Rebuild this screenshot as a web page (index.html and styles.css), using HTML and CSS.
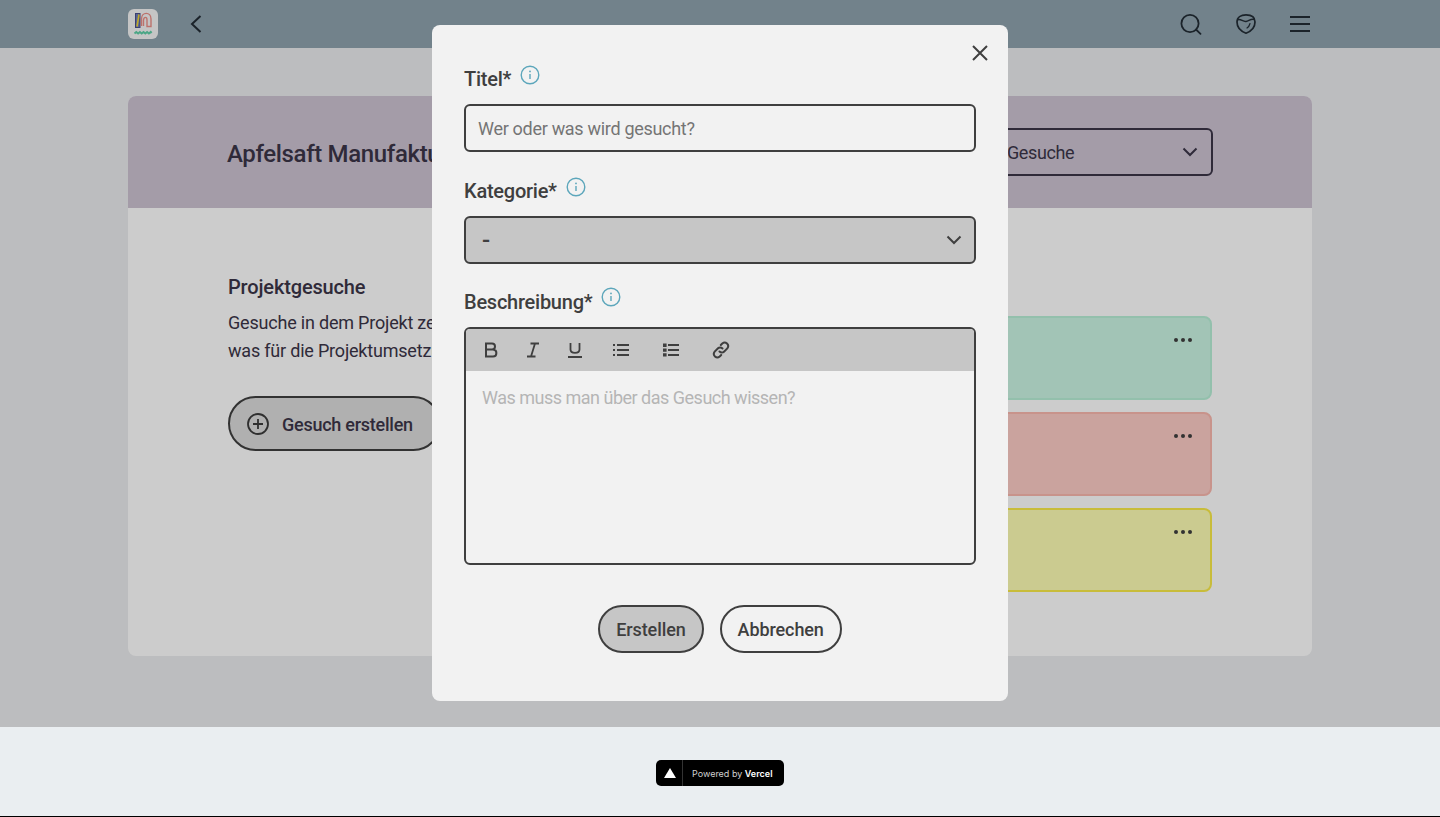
FILE: index.html
```html
<!DOCTYPE html>
<html lang="de">
<head>
    <meta charset="UTF-8">
    <meta name="viewport" content="width=device-width, initial-scale=1.0">
    <title>Projektgesuche</title>
    <link rel="stylesheet" href="styles.css">
</head>
<body>
<div class="page">
    <header class="topbar">
        <div class="topbar-left">
            <div class="logo">
                <svg width="30" height="30" viewBox="0 0 30 30" fill="none">
                    <rect x="7.500" y="4.500" width="4.500" height="14" fill="#6f7cb8" stroke="#4a4f8c"/>
                    <path d="M9 17.500 L11 5.500" stroke="#f2d632" stroke-width="1.600"/>
                    <path d="M13.500 17 V10 C13.500 2.500 23 2.500 23 10 V17.500 H19 V11 C19 7.500 16 7.500 15.500 11 V17" stroke="#ec8f88" stroke-width="1.400"/>
                    <path d="M6.500 24.500 l1.800 -1.500 1.800 1.500 1.800 -1.500 1.800 1.500 1.800 -1.500 1.800 1.500 1.800 -1.500 1.800 1.500 1.800 -1.500 .9 1" stroke="#5fd0a8" stroke-width="2"/>
                </svg>
            </div>
            <button class="icon-button back-button" type="button">
                <svg width="12" height="18" viewBox="0 0 12 18" fill="none"><path d="M10.500 1 L2 9 L10.500 17" stroke="#222c35" stroke-width="2"/></svg>
            </button>
        </div>
        <div class="topbar-right">
            <svg width="22" height="22" viewBox="0 0 22 22" fill="none"><circle cx="10" cy="10.500" r="8.600" stroke="#222c35" stroke-width="1.800"/><path d="M16 16.500 L20.500 20.800" stroke="#222c35" stroke-width="1.800" stroke-linecap="round"/></svg>
            <svg width="20" height="20" viewBox="0 0 20 20" fill="none"><path d="M10 19.200 C5.500 17.500 1 14 1 8 C1 3 5 .9 10 .9 C15 .9 19 3 19 8 C19 14 14.500 17.500 10 19.200 Z" stroke="#222c35" stroke-width="1.700"/><path d="M1.500 6 C4 4 7 8 10 7.500 C13 7 14.500 4.500 18.500 5.500" stroke="#222c35" stroke-width="1.400"/><path d="M14 9.500 C13.500 11.500 12.500 13 11 14" stroke="#222c35" stroke-width="1.200" stroke-linecap="round"/></svg>
            <svg width="20" height="16" viewBox="0 0 20 16" fill="none"><path d="M0 1 H20 M0 8 H20 M0 15 H20" stroke="#222c35" stroke-width="2"/></svg>
        </div>
    </header>

    <main class="content">
        <section class="project-card">
            <div class="project-head">
                <h1>Apfelsaft Manufaktur</h1>
                <div class="head-select">
                    <span>Gesuche</span>
                    <svg width="16" height="10" viewBox="0 0 16 10" fill="none"><path d="M1.500 1.500 L8 8 L14.500 1.500" stroke="#3b3548" stroke-width="2"/></svg>
                </div>
            </div>
            <div class="project-body">
                <div class="intro">
                    <h2>Projektgesuche</h2>
                    <p>Gesuche in dem Projekt zeigen,<br>was für die Projektumsetzung fehlt.</p>
                    <button class="create-button" type="button">
                        <svg width="24" height="24" viewBox="0 0 24 24" fill="none"><circle cx="12" cy="12" r="10" stroke="#3b3b3b" stroke-width="1.800"/><path d="M12 7 V17 M7 12 H17" stroke="#3b3b3b" stroke-width="1.800"/></svg>
                        <span>Gesuch erstellen</span>
                    </button>
                </div>
                <div class="request-list">
                    <div class="request green"><span class="dots"><i></i><i></i><i></i></span></div>
                    <div class="request red"><span class="dots"><i></i><i></i><i></i></span></div>
                    <div class="request yellow"><span class="dots"><i></i><i></i><i></i></span></div>
                </div>
            </div>
        </section>
    </main>

    <div class="overlay">
        <form class="modal">
            <button class="close-button" type="button">
                <svg width="16" height="16" viewBox="0 0 16 16" fill="none"><path d="M1 1 L15 15 M15 1 L1 15" stroke="#3f3f3f" stroke-width="2"/></svg>
            </button>

            <div class="field-label">
                <label>Titel*</label>
                <svg class="info" width="20" height="20" viewBox="0 0 20 20" fill="none"><circle cx="10" cy="10" r="8.800" stroke="#5ca6bb" stroke-width="1.400"/><path d="M10 9 V14" stroke="#5ca6bb" stroke-width="1.400"/><circle cx="10" cy="6.400" r=".9" fill="#5ca6bb"/></svg>
            </div>
            <div class="text-input">Wer oder was wird gesucht?</div>

            <div class="field-label">
                <label>Kategorie*</label>
                <svg class="info" width="20" height="20" viewBox="0 0 20 20" fill="none"><circle cx="10" cy="10" r="8.800" stroke="#5ca6bb" stroke-width="1.400"/><path d="M10 9 V14" stroke="#5ca6bb" stroke-width="1.400"/><circle cx="10" cy="6.400" r=".9" fill="#5ca6bb"/></svg>
            </div>
            <div class="select-input">
                <span class="select-value">-</span>
                <svg width="16" height="10" viewBox="0 0 16 10" fill="none"><path d="M1.500 1.500 L8 8 L14.500 1.500" stroke="#3f3f3f" stroke-width="2"/></svg>
            </div>

            <div class="field-label editor-label">
                <label>Beschreibung*</label>
                <svg class="info" width="20" height="20" viewBox="0 0 20 20" fill="none"><circle cx="10" cy="10" r="8.800" stroke="#5ca6bb" stroke-width="1.400"/><path d="M10 9 V14" stroke="#5ca6bb" stroke-width="1.400"/><circle cx="10" cy="6.400" r=".9" fill="#5ca6bb"/></svg>
            </div>
            <div class="editor">
                <div class="toolbar">
                    <svg width="14" height="16" viewBox="0 0 14 16" fill="none"><path d="M2 1.500 H8 C12 1.500 12 7.500 8 7.500 H2 Z M2 7.500 H9 C13.500 7.500 13.500 14.500 9 14.500 H2 Z" stroke="#3f3f3f" stroke-width="2"/></svg>
                    <svg width="14" height="16" viewBox="0 0 14 16" fill="none"><path d="M4.500 1.500 H13 M1 14.500 H9.500 M9 1.500 L5 14.500" stroke="#3f3f3f" stroke-width="1.800"/></svg>
                    <svg width="14" height="16" viewBox="0 0 14 16" fill="none"><path d="M2.500 1 V7.500 C2.500 12 11.500 12 11.500 7.500 V1 M0 15 H14" stroke="#3f3f3f" stroke-width="1.800"/></svg>
                    <svg class="tool-bullets" width="16" height="14" viewBox="0 0 16 14" fill="none"><path d="M4 2 H16 M4 7 H16 M4 12 H16" stroke="#3f3f3f" stroke-width="1.800"/><path d="M0 2 H2 M0 7 H2 M0 12 H2" stroke="#3f3f3f" stroke-width="1.800"/></svg>
                    <svg class="tool-numbers" width="16" height="14" viewBox="0 0 16 14" fill="none"><path d="M5 2 H16 M5 7 H16 M5 12 H16" stroke="#3f3f3f" stroke-width="1.800"/><path d="M0 .6 H3.600 V4 H0 Z M0 5.400 H3.600 V8.800 H0 Z M0 10.200 H3.600 V13.600 H0 Z" fill="#3f3f3f"/></svg>
                    <svg class="tool-link" width="18" height="18" viewBox="0 0 18 18" fill="none"><path d="M7.500 10.500 C9 12 11 11.700 12 10.700 L15.300 7.400 C18 4 13.500 -.4 10.300 2.500 L8.800 4" stroke="#3f3f3f" stroke-width="2" stroke-linecap="round"/><path d="M10.500 7.500 C9 6 7 6.300 6 7.300 L2.700 10.600 C0 14 4.500 18.400 7.700 15.500 L9.200 14" stroke="#3f3f3f" stroke-width="2" stroke-linecap="round"/></svg>
                </div>
                <div class="editor-text">Was muss man über das Gesuch wissen?</div>
            </div>

            <div class="modal-actions">
                <button class="pill primary" type="button">Erstellen</button>
                <button class="pill" type="button">Abbrechen</button>
            </div>
        </form>
    </div>
</div>

<footer class="footer">
    <a class="vercel-badge" href="#">
        <span class="vercel-mark"><svg width="12" height="10" viewBox="0 0 12 10"><path d="M6 0 L12 10 H0 Z" fill="#fff"/></svg></span>
        <span class="vercel-text">Powered by <b>Vercel</b></span>
    </a>
</footer>
</body>
</html>
```

FILE: styles.css
```css
* {
    box-sizing: border-box;
}

body {
    margin: 0;
    font-family: Roboto, "Liberation Sans", sans-serif;
    background-color: #eaeef1;
    color: #3b3548;
}

button {
    font-family: inherit;
    color: inherit;
}

.page {
    position: relative;
    height: 727px;
    overflow: hidden;
    background-color: #ecedef;
}

/* top bar */
.topbar {
    height: 48px;
    padding: 0 130px 0 128px;
    background-color: #8fa3ae;
    display: flex;
    align-items: center;
    justify-content: space-between;
}

.topbar-left {
    display: flex;
    align-items: center;
    gap: 32px;
}

.topbar-right {
    display: flex;
    align-items: center;
    gap: 34px;
}

.logo {
    width: 30px;
    height: 30px;
    border-radius: 6px;
    background-color: #f7f7f7;
}

.logo svg {
    display: block;
}

.icon-button {
    padding: 0;
    border: 0;
    background: none;
    display: flex;
}

/* project card */
.content {
    padding: 48px 128px 0;
}

.project-card {
    height: 560px;
    border-radius: 8px;
    overflow: hidden;
    background-color: #fff;
}

.project-head {
    height: 112px;
    padding: 0 99px;
    background-color: #cdc4d3;
    display: flex;
    align-items: center;
    justify-content: space-between;
}

.project-head h1 {
    margin: 0;
    padding-top: 4px;
    font-size: 24px;
    font-weight: 500;
    letter-spacing: -0.35px;
}

.head-select {
    width: 224px;
    height: 48px;
    padding: 0 13px 0 16px;
    border: 2px solid #3b3548;
    border-radius: 6px;
    font-size: 18px;
    letter-spacing: -0.4px;
    display: flex;
    align-items: center;
    justify-content: space-between;
}

.project-body {
    padding: 64px 100px 0;
    display: grid;
    grid-template-columns: 1fr 1fr;
    gap: 32px;
}

.intro h2 {
    margin: 0 0 7px;
    font-size: 20px;
    font-weight: 500;
    line-height: 30px;
    letter-spacing: -0.15px;
}

.intro p {
    margin: 0 0 31px;
    font-size: 18px;
    line-height: 28px;
    letter-spacing: -0.2px;
    white-space: nowrap;
}

.create-button {
    width: 213px;
    height: 55px;
    padding: 0 16px;
    border: 2px solid #3f3f3f;
    border-radius: 28px;
    background-color: #dcdcdc;
    font-size: 18px;
    font-weight: 500;
    letter-spacing: -0.25px;
    display: flex;
    align-items: center;
    gap: 12px;
}

.create-button span {
    margin-top: 2px;
}

.request-list {
    padding-top: 44px;
    display: flex;
    flex-direction: column;
    gap: 12px;
}

.request {
    height: 84px;
    padding: 20px 18px;
    border: 2px solid;
    border-radius: 8px;
    display: flex;
    justify-content: flex-end;
}

.green {
    background-color: #cbf6e4;
    border-color: #b8f0d8;
}

.red {
    background-color: #fdccc6;
    border-color: #fab8ae;
}

.yellow {
    background-color: #fefeb4;
    border-color: #fbec49;
}

.dots {
    height: 4px;
    display: flex;
    gap: 3px;
}

.dots i {
    width: 4px;
    height: 4px;
    border-radius: 50%;
    background-color: #3f3f3f;
}

/* modal */
.overlay {
    position: absolute;
    inset: 0;
    padding-bottom: 1px;
    background-color: rgba(0, 0, 0, 0.2);
    display: flex;
    align-items: center;
    justify-content: center;
}

.modal {
    position: relative;
    width: 576px;
    height: 676px;
    padding: 39px 32px 48px;
    border-radius: 8px;
    background-color: #f2f2f2;
    color: #3f3f3f;
}

.close-button {
    position: absolute;
    top: 20px;
    right: 20px;
    padding: 0;
    border: 0;
    background: none;
    display: flex;
}

.field-label {
    height: 32px;
    margin: 24px 0 8px;
    display: flex;
    align-items: center;
    gap: 9px;
    font-size: 20px;
    font-weight: 500;
    letter-spacing: -0.25px;
}

.field-label:first-of-type {
    margin-top: 0;
}

.field-label label {
    position: relative;
    top: -1px;
}

.editor-label {
    margin: 23px 0 8px;
}

.info {
    margin-top: -10px;
}

.editor-label .info {
    margin-top: -12px;
}

.text-input,
.select-input {
    height: 48px;
    border: 2px solid #3f3f3f;
    border-radius: 6px;
    font-size: 18px;
    display: flex;
    align-items: center;
}

.text-input {
    padding: 0 12px;
    color: #757575;
    background-color: #f2f2f2;
    letter-spacing: -0.3px;
}

.select-input {
    padding: 0 12px 0 16px;
    background-color: #c6c6c6;
    justify-content: space-between;
}

.select-value {
    font-size: 24px;
    font-weight: 500;
}

.editor {
    height: 238px;
    border: 2px solid #3f3f3f;
    border-radius: 6px;
    overflow: hidden;
}

.toolbar {
    height: 42px;
    padding-left: 18px;
    background-color: #c6c6c6;
    display: flex;
    align-items: center;
    gap: 28px;
}

.tool-bullets {
    margin-left: 3px;
}

.tool-numbers {
    margin-left: 6px;
}

.tool-link {
    margin-left: 5px;
}

.editor-text {
    padding: 17px 16px;
    font-size: 18px;
    line-height: 20px;
    letter-spacing: -0.5px;
    color: #b5b5b5;
}

.modal-actions {
    margin-top: 40px;
    display: flex;
    justify-content: center;
    gap: 16px;
}

.pill {
    height: 48px;
    padding: 0 16px;
    border: 2px solid #3f3f3f;
    border-radius: 24px;
    background-color: #f2f2f2;
    font-size: 18px;
    font-weight: 500;
    letter-spacing: -0.1px;
}

.pill.primary {
    background-color: #c6c6c6;
}

/* footer */
.footer {
    height: 90px;
    padding-top: 33px;
    border-bottom: 1px solid #000;
    display: flex;
    justify-content: center;
}

.vercel-badge {
    width: 128px;
    height: 26px;
    border-radius: 5px;
    background-color: #000;
    color: #d0d0d0;
    text-decoration: none;
    display: flex;
    align-items: center;
}

.vercel-mark {
    width: 27px;
    height: 26px;
    padding-left: 2px;
    border-right: 1px solid #333;
    display: flex;
    align-items: center;
    justify-content: center;
}

.vercel-text {
    margin-left: 9px;
    font-family: Inter, sans-serif;
    font-size: 9px;
    white-space: nowrap;
}

.vercel-text b {
    color: #fff;
    font-weight: 600;
}
```
